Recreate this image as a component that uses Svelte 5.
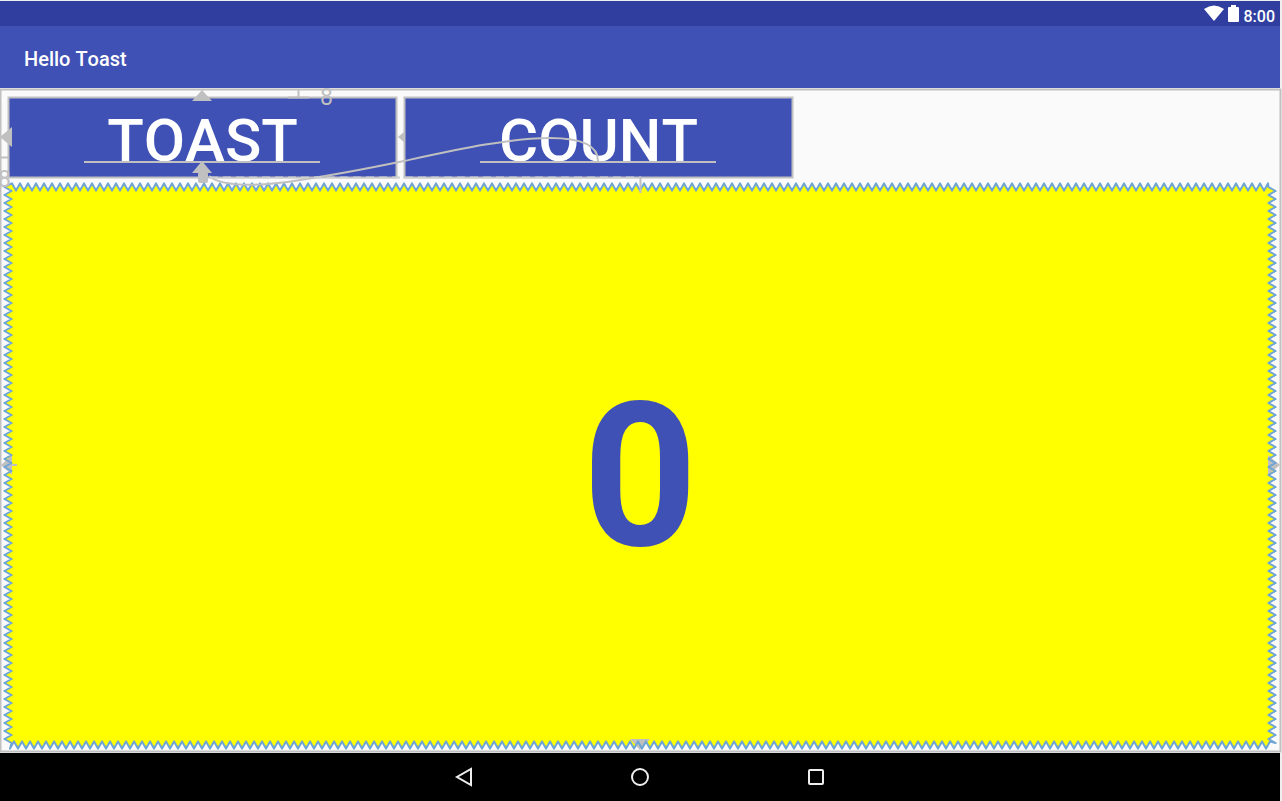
<script>
  let boardWidth = $state(1282);
  let boardHeight = $state(665);
  let viewWidth = $state(1264);
  let viewHeight = $state(558);

  // Spring-shaped outline running clockwise round the match-constraint view.
  function springPath(width, height) {
    const right = width + 8;
    const bottom = height + 8;
    const low = 0.4;
    const high = 7.6;
    const points = [];
    for (let x = 8; x <= width; x += 4) points.push([x, (x - 8) % 8 ? high : low]);
    for (let y = 4; y <= bottom - 6; y += 4) points.push([(y - 4) % 8 ? right - low : right - high, y]);
    for (let x = right - 6; x >= 6; x -= 4) points.push([x, (right - 6 - x) % 8 ? bottom - low : bottom - high]);
    for (let y = bottom - 6; y >= 4; y -= 4) points.push([(bottom - 6 - y) % 8 ? low : high, y]);
    return 'M' + points.map((p) => p.join(' ')).join('L') + 'Z';
  }

  let spring = $derived(springPath(viewWidth, viewHeight));
</script>

<div class="device">
  <header>
    <div class="status">
      <svg width="20" height="17" viewBox="0 0 20 17" aria-hidden="true">
        <path d="M0 4Q10-3 20 4L10 16Z" fill="#fff" />
      </svg>
      <svg width="12" height="17" viewBox="0 0 12 17" aria-hidden="true">
        <path d="M3 0h5v2h2q1 0 1 1v13q0 1-1 1h-9q-1 0-1-1v-13q0-1 1-1h2z" fill="#fff" />
      </svg>
      <span>8:00</span>
    </div>
    <div class="appbar"><h1>Hello Toast</h1></div>
  </header>

  <main bind:clientWidth={boardWidth} bind:clientHeight={boardHeight}>
    <div class="buttons">
      <button>TOAST</button>
      <button>COUNT</button>
    </div>
    <div class="count" bind:clientWidth={viewWidth} bind:clientHeight={viewHeight}>
      <svg class="spring" width={viewWidth + 8} height={viewHeight + 8} aria-hidden="true">
        <path d={spring} fill="#ff0" />
        <g fill="#c0c0c0">
          <path d="M-3 {viewHeight / 2 + 3}l11-10v20z" />
          <path d="M{viewWidth + 12} {viewHeight / 2 + 3}l-12-10v20z" />
          <path d="M{viewWidth / 2 + 4} {viewHeight + 9}l-10-11h20z" />
        </g>
        <path d="M8 {viewHeight / 2 + 3}h5" stroke="#c0c0c0" stroke-width="2" />
        <path d={spring} fill="none" stroke="#6fa5d4" stroke-width="2" stroke-linejoin="round" />
      </svg>
      <output>0</output>
    </div>

    <svg class="constraints" width={boardWidth} height={boardHeight} aria-hidden="true">
      <g fill="none" stroke="#c0c0c0" stroke-width="2">
        <rect x="0.5" y="1.5" width={boardWidth - 2} height={boardHeight - 3} />
        <rect x="8.5" y="9.5" width="388" height="80" />
        <rect x="404.5" y="9.5" width="388" height="80" />
        <path d="M84 74H320M480 74H716" />
        <path d="M209 88C225 101 270 97 300 92C340 86 375 79 404 73C460 61 510 50 550 50C580 50 598 57 598 73" />
        <path d="M210 89.5H641" stroke="#d0d0d0" stroke-dasharray="8 5" />
        <path d="M640.5 89v16" />
        <path d="M298.5 2v7M288 9.5h21M1 69.5h8" stroke-width="2" />
      </g>
      <g fill="#c0c0c0">
        <path d="M202 2l10 11h-20zM0 49l12-10v20zM202 73l10 12h-20zM398 49l7-6v12z" />
        <rect x="198" y="84" width="10" height="11" rx="2" />
        <text x="320" y="17">8</text>
        <text x="-2" y="99">8</text>
      </g>
    </svg>
  </main>

  <nav aria-label="System">
    <button aria-label="Back">
      <svg width="20" height="20" viewBox="0 0 20 20"><path d="M17 2V18L3 10Z" /></svg>
    </button>
    <button aria-label="Home">
      <svg width="20" height="20" viewBox="0 0 20 20"><circle cx="10" cy="10" r="8" /></svg>
    </button>
    <button aria-label="Overview">
      <svg width="20" height="20" viewBox="0 0 20 20"><rect x="3" y="3" width="14" height="14" rx="1" /></svg>
    </button>
  </nav>
</div>

<style>
  :global(body) {
    margin: 0;
    background: #eee;
  }
  .device {
    box-sizing: border-box;
    min-height: 100vh;
    padding-top: 1px;
    display: flex;
    flex-direction: column;
    font-family: Roboto, sans-serif;
    font-kerning: none;
  }
  header {
    margin-right: 2px;
    color: #fff;
  }
  .status {
    height: 25px;
    padding: 0 5px;
    display: flex;
    align-items: center;
    justify-content: flex-end;
    gap: 4px;
    background: #303f9f;
    font-size: 16px;
    font-weight: 500;
  }
  .status span {
    padding-top: 6px;
    line-height: 19px;
  }
  .appbar {
    height: 62px;
    padding: 4px 24px 0;
    box-sizing: border-box;
    display: flex;
    align-items: center;
    background: #3f51b5;
  }
  h1 {
    margin: 0;
    font-size: 20px;
    font-weight: 500;
    line-height: 24px;
  }
  main {
    flex: 1;
    position: relative;
    box-sizing: border-box;
    padding: 9px 10px 8px 8px;
    display: flex;
    flex-direction: column;
    gap: 9px;
    background: #fafafa;
  }
  .buttons {
    display: flex;
    gap: 7px;
  }
  .buttons button {
    width: 389px;
    height: 81px;
    padding: 7px 0 0;
    border: 0;
    background: #3f51b5;
    color: #fff;
    font: 500 60px/74px Roboto, sans-serif;
    font-kerning: none;
  }
  .count {
    flex: 1;
    position: relative;
    display: flex;
    align-items: center;
    justify-content: center;
  }
  .spring {
    position: absolute;
    top: -4px;
    left: -4px;
    overflow: visible;
  }
  output {
    position: relative;
    padding-top: 22px;
    color: #3f51b5;
    font-size: 200px;
    font-weight: 700;
    line-height: 234px;
  }
  .constraints {
    position: absolute;
    top: 0;
    left: 0;
    overflow: visible;
    pointer-events: none;
  }
  .constraints text {
    font-size: 23px;
  }
  nav {
    height: 48px;
    margin-right: 2px;
    display: flex;
    align-items: center;
    justify-content: center;
    gap: 128px;
    background: #000;
  }
  nav button {
    width: 48px;
    height: 48px;
    padding: 0;
    border: 0;
    display: grid;
    place-items: center;
    background: none;
  }
  nav svg {
    fill: none;
    stroke: #eee;
    stroke-width: 2;
  }
</style>
